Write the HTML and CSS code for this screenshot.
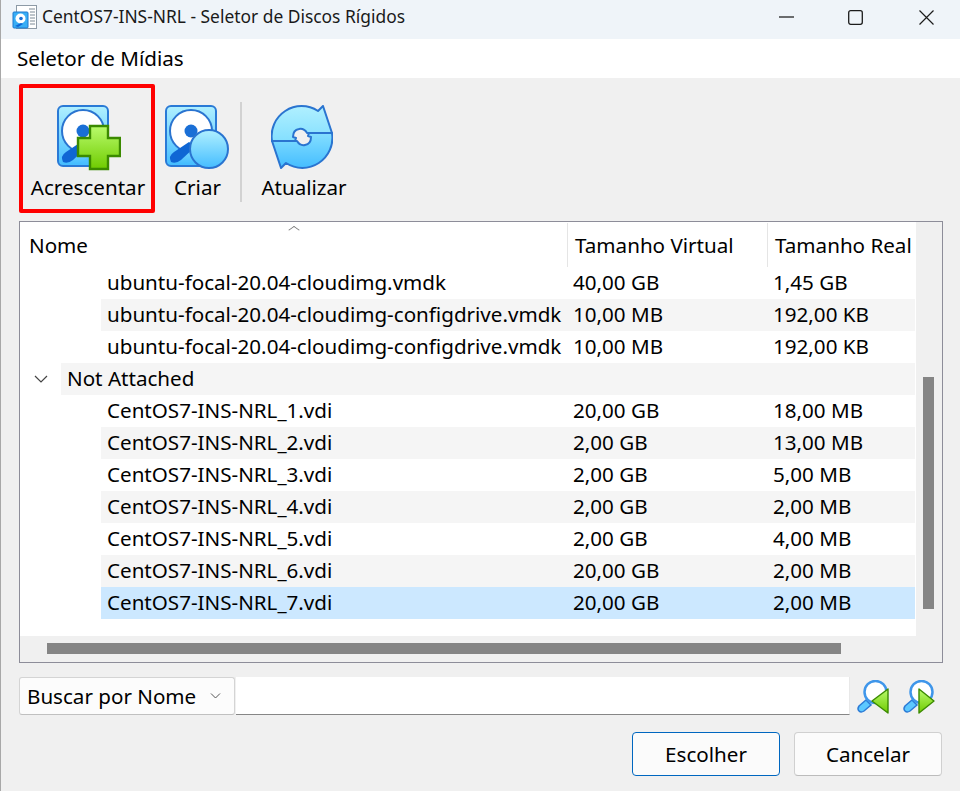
FILE: index.html
```html
<!DOCTYPE html>
<html>
<head>
	<meta charset="utf-8">
	<title>CentOS7-INS-NRL - Seletor de Discos Rígidos</title>
	<link rel="stylesheet" href="styles.css">
</head>
<body>
	<svg class="icon-defs">
		<defs>
			<linearGradient id="blue" x1="0" y1="0" x2="0" y2="1">
				<stop offset="0" stop-color="#b0f0ff"/>
				<stop offset="1" stop-color="#45bdff"/>
			</linearGradient>
			<linearGradient id="blue-top" x1="0" y1="0" x2="0" y2="1">
				<stop offset="0" stop-color="#b0f0ff"/>
				<stop offset="1" stop-color="#84dfff"/>
			</linearGradient>
			<linearGradient id="blue-bottom" x1="0" y1="0" x2="0" y2="1">
				<stop offset="0" stop-color="#84dfff"/>
				<stop offset="1" stop-color="#45bdff"/>
			</linearGradient>
			<linearGradient id="green" x1="0" y1="0" x2="0" y2="1">
				<stop offset="0" stop-color="#b9fb6c"/>
				<stop offset="1" stop-color="#6fcb00"/>
			</linearGradient>
			<symbol id="hdd" viewBox="0 0 52 62">
				<rect x="1" y="1" width="50" height="60" rx="5" fill="url(#blue)" stroke="#2a7ad6" stroke-width="2"/>
				<circle cx="26" cy="26" r="21" fill="#fff" stroke="#2a74d0" stroke-width="2"/>
				<path d="M6 59 Q4 52 10 48 L22 39 L32 32 L36 46 L24 59 Z" fill="url(#blue)"/>
				<path d="M6 57 Q3 51 9 47 L24 37 L30 42 L16 55 Q11 59 6 57 Z" fill="#0f66d4"/>
				<circle cx="26" cy="26" r="6.5" fill="#1a6fd6"/>
			</symbol>
			<symbol id="lens" viewBox="0 0 34 36">
				<path d="M3 26 L10 20 L15 25 L8 31 Q5 33 3 31 Q1 29 3 26 Z" fill="#5cc8ff" stroke="#2a7ad6" stroke-width="1.5"/>
				<circle cx="19.5" cy="12" r="11" fill="#fff" stroke="#3f96ea" stroke-width="2.5"/>
			</symbol>
		</defs>
	</svg>

	<div class="window">
		<div class="titlebar">
			<svg class="title-icon" width="26" height="26" viewBox="0 0 26 26">
				<rect x="4.5" y="1.5" width="20" height="23" fill="#fff" stroke="#8d9aa6"/>
				<path d="M17 5h6M18 8h5M18 11h5M18 14h5M18 17h5M18 20h5" stroke="#7d8a96"/>
				<rect x="1" y="8" width="15" height="16" rx="1" fill="#39aef5" stroke="#1d78cf"/>
				<circle cx="8.5" cy="14.5" r="5" fill="#fff"/>
				<circle cx="9" cy="14.5" r="1.8" fill="#1a6fd6"/>
				<path d="M3 22l6-3 2 1-5 3z" fill="#0f66d4"/>
			</svg>
			<span class="title-text">CentOS7-INS-NRL - Seletor de Discos Rígidos</span>
			<div class="window-controls">
				<svg class="ctl-min" width="15" height="2" viewBox="0 0 15 2"><path d="M0 1h15" stroke="#111" stroke-width="1.2"/></svg>
				<svg class="ctl-max" width="15" height="15" viewBox="0 0 15 15"><rect x="0.7" y="0.7" width="13.6" height="13.6" rx="2" fill="none" stroke="#1c1c1c" stroke-width="1.3"/></svg>
				<svg class="ctl-close" width="15" height="15" viewBox="0 0 15 15"><path d="M0.5 0.5l14 14M14.5 0.5l-14 14" fill="none" stroke="#1c1c1c" stroke-width="1.2"/></svg>
			</div>
		</div>
		<div class="subtitle">Seletor de Mídias</div>

		<div class="toolbar">
			<div class="tool tool-add">
				<svg class="tool-icon" width="64" height="66" viewBox="0 0 64 66">
					<use href="#hdd" x="0" y="0" width="52" height="62"/>
					<path d="M33 21H51V33H63V51H51V64H33V51H21V33H33Z" fill="url(#green)" stroke="#3b8a00" stroke-width="2.4"/>
				</svg>
				<span>Acrescentar</span>
			</div>
			<div class="tool tool-new">
				<svg class="tool-icon" width="64" height="66" viewBox="0 0 64 66">
					<use href="#hdd" x="0" y="0" width="52" height="62"/>
					<circle cx="44" cy="44" r="19" fill="url(#blue)" stroke="#2a74d0" stroke-width="2"/>
				</svg>
				<span>Criar</span>
			</div>
			<div class="tool-sep"></div>
			<div class="tool tool-refresh">
				<svg class="tool-icon" width="62" height="66" viewBox="0 0 62 64">
					<path d="M1 35 A30 30 0 0 1 47 5 L52 0 L61 27 L36 27 Q33 22 28 23 Q22 24 22 31 L25 32 L24 35 Z" fill="url(#blue-top)" stroke="#2a74d0" stroke-width="2" stroke-linejoin="round"/>
					<path d="M61 27 A30 30 0 0 1 15 57 L10 62 L1 35 L26 35 Q29 40 34 39 Q40 38 40 31 L37 30 L38 27 Z" fill="url(#blue-bottom)" stroke="#2a74d0" stroke-width="2" stroke-linejoin="round"/>
				</svg>
				<span>Atualizar</span>
			</div>
		</div>

		<div class="media-tree">
			<div class="tree-main">
				<div class="tree-view">
					<div class="tree-head">
						<div class="col-name">Nome<i class="sort-mark"></i></div>
						<div class="col-virtual">Tamanho Virtual</div>
						<div class="col-real">Tamanho Real</div>
					</div>
					<div class="row"><div class="col-name">ubuntu-focal-20.04-cloudimg.vmdk</div><div class="col-virtual">40,00 GB</div><div class="col-real">1,45 GB</div></div>
					<div class="row alt"><div class="col-name">ubuntu-focal-20.04-cloudimg-configdrive.vmdk</div><div class="col-virtual">10,00 MB</div><div class="col-real">192,00 KB</div></div>
					<div class="row"><div class="col-name">ubuntu-focal-20.04-cloudimg-configdrive.vmdk</div><div class="col-virtual">10,00 MB</div><div class="col-real">192,00 KB</div></div>
					<div class="group">
						<svg class="twisty" width="14" height="8" viewBox="0 0 14 8"><path d="M1 1l6 6 6-6" fill="none" stroke="#444" stroke-width="1.2"/></svg>
						<div class="group-label">Not Attached</div>
					</div>
					<div class="row"><div class="col-name">CentOS7-INS-NRL_1.vdi</div><div class="col-virtual">20,00 GB</div><div class="col-real">18,00 MB</div></div>
					<div class="row alt"><div class="col-name">CentOS7-INS-NRL_2.vdi</div><div class="col-virtual">2,00 GB</div><div class="col-real">13,00 MB</div></div>
					<div class="row"><div class="col-name">CentOS7-INS-NRL_3.vdi</div><div class="col-virtual">2,00 GB</div><div class="col-real">5,00 MB</div></div>
					<div class="row alt"><div class="col-name">CentOS7-INS-NRL_4.vdi</div><div class="col-virtual">2,00 GB</div><div class="col-real">2,00 MB</div></div>
					<div class="row"><div class="col-name">CentOS7-INS-NRL_5.vdi</div><div class="col-virtual">2,00 GB</div><div class="col-real">4,00 MB</div></div>
					<div class="row alt"><div class="col-name">CentOS7-INS-NRL_6.vdi</div><div class="col-virtual">20,00 GB</div><div class="col-real">2,00 MB</div></div>
					<div class="row selected"><div class="col-name">CentOS7-INS-NRL_7.vdi</div><div class="col-virtual">20,00 GB</div><div class="col-real">2,00 MB</div></div>
				</div>
				<div class="vscroll"><div class="vthumb"></div></div>
			</div>
			<div class="hscroll"><div class="hthumb"></div></div>
		</div>

		<div class="search-row">
			<div class="combo">
				<span>Buscar por Nome</span>
				<svg width="11" height="6" viewBox="0 0 11 6"><path d="M1 0.5l4.5 4.5 4.5-4.5" fill="none" stroke="#555"/></svg>
			</div>
			<div class="search-input"></div>
			<svg class="search-btn" width="34" height="36" viewBox="0 0 34 36">
				<use href="#lens" width="34" height="36"/>
				<path d="M16 21L32 9V33Z" fill="url(#green)" stroke="#3b8a00" stroke-width="1.4" stroke-linejoin="round"/>
			</svg>
			<svg class="search-btn" width="34" height="36" viewBox="0 0 34 36">
				<use href="#lens" width="34" height="36"/>
				<path d="M17 9L32 21L17 33Z" fill="url(#green)" stroke="#3b8a00" stroke-width="1.4" stroke-linejoin="round"/>
			</svg>
		</div>

		<div class="button-row">
			<div class="btn btn-default">Escolher</div>
			<div class="btn">Cancelar</div>
		</div>
	</div>
</body>
</html>
```

FILE: styles.css
```css
html, body {
	margin: 0;
	padding: 0;
}
body {
	width: 960px;
	height: 791px;
	overflow: hidden;
	background: #f0f0f0;
	font-family: "Noto Sans", sans-serif;
	font-size: 20.6px;
	color: #000;
}
.icon-defs {
	position: absolute;
	width: 0;
	height: 0;
}
.window {
	height: 791px;
	box-sizing: border-box;
	border-left: 1px solid #a8a8a8;
	display: flex;
	flex-direction: column;
}

/* title bar */
.titlebar {
	height: 39px;
	box-sizing: border-box;
	padding: 0 0 5px 11px;
	background: #eff4f9;
	display: flex;
	align-items: center;
}
.title-icon {
	margin-right: 4px;
}
.title-text {
	font-size: 17.4px;
	color: #1a1a1a;
	margin-bottom: 2px;
}
.window-controls {
	margin-left: auto;
	display: flex;
	align-items: center;
}
.ctl-max {
	margin-left: 54px;
}
.ctl-close {
	margin-left: 56px;
	margin-right: 26px;
}
.subtitle {
	height: 39px;
	line-height: 39px;
	background: #fff;
	padding-left: 16px;
}

/* toolbar */
.toolbar {
	height: 143px;
	box-sizing: border-box;
	padding: 6px 0 0 18px;
	display: flex;
	align-items: flex-start;
}
.tool {
	display: flex;
	flex-direction: column;
	align-items: center;
}
.tool span {
	line-height: 26px;
	margin-top: 3px;
}
.tool-icon {
	display: block;
}
.tool-add {
	width: 136px;
	height: 129px;
	box-sizing: border-box;
	border: 4px solid #f00;
	border-radius: 2px;
	padding: 17px 0 0 4px;
}
.tool-add span {
	margin-left: -2px;
}
.tool-new {
	margin: 21px 0 0 9px;
	width: 66px;
}
.tool-new span {
	margin-left: 1px;
}
.tool-sep {
	width: 2px;
	height: 100px;
	margin: 18px 0 0 10px;
	background: #d2d2d2;
}
.tool-refresh {
	margin: 21px 0 0 19px;
	width: 86px;
}
.tool-refresh .tool-icon {
	margin-right: 4px;
}

/* media tree */
.media-tree {
	width: 924px;
	height: 442px;
	margin-left: 18px;
	box-sizing: border-box;
	border: 1px solid #8d8d99;
	background: #f0f0f0;
	display: flex;
	flex-direction: column;
}
.tree-main {
	height: 414px;
	display: flex;
}
.tree-view {
	width: 896px;
	background: #fff;
	overflow: hidden;
}
.tree-head, .row {
	display: flex;
	white-space: nowrap;
}
.tree-head {
	height: 45px;
	box-sizing: border-box;
	padding-top: 1px;
	line-height: 44px;
}
.tree-head .col-name {
	width: 547px;
	box-sizing: border-box;
	padding-left: 9px;
	position: relative;
}
.tree-head .col-virtual {
	width: 200px;
	box-sizing: border-box;
	padding-left: 7px;
	border-left: 1px solid #e5e5e5;
}
.tree-head .col-real {
	width: 148px;
	box-sizing: border-box;
	padding-left: 7px;
	border-left: 1px solid #e5e5e5;
	overflow: hidden;
}
.sort-mark {
	position: absolute;
	left: 270px;
	top: 3px;
	width: 7px;
	height: 7px;
	border-left: 1px solid #777;
	border-top: 1px solid #777;
	transform: scaleY(0.7) rotate(45deg);
}
.row {
	height: 32px;
	line-height: 31px;
	margin: 0 1px 0 81px;
}
.row .col-name {
	width: 472px;
	padding-left: 6px;
	box-sizing: border-box;
}
.row .col-virtual {
	width: 200px;
}
.row.alt, .group-label {
	background: #f5f5f5;
}
.row.selected {
	background: #cce8ff;
}
.group {
	height: 32px;
	display: flex;
	align-items: center;
	padding: 0 1px 0 14px;
}
.group-label {
	flex: 1;
	height: 32px;
	line-height: 31px;
	margin-left: 13px;
	padding-left: 6px;
}
.twisty {
	flex: none;
}
.vscroll {
	flex: 1;
	padding: 155px 8px 0 7px;
}
.vthumb {
	width: 11px;
	height: 232px;
	background: #858585;
}
.hscroll {
	flex: 1;
	padding: 7px 0 0 27px;
}
.hthumb {
	width: 794px;
	height: 11px;
	background: #858585;
}

/* search */
.search-row {
	display: flex;
	align-items: flex-start;
	margin: 14px 0 0 18px;
	height: 38px;
}
.combo {
	width: 216px;
	height: 38px;
	box-sizing: border-box;
	background: #fcfcfc;
	border: 1px solid #d4d4d4;
	border-bottom-color: #c0c0c0;
	border-radius: 3px;
	display: flex;
	align-items: center;
	justify-content: space-between;
	padding: 0 13px 0 7px;
}
.search-input {
	width: 614px;
	height: 38px;
	box-sizing: border-box;
	margin-left: 1px;
	background: #fff;
	border-bottom: 1px solid #868686;
	border-right: 1px solid #e8e8e8;
}
.search-btn {
	margin: 3px 0 0 6px;
	display: block;
}
.search-btn + .search-btn {
	margin-left: 12px;
}

/* buttons */
.button-row {
	display: flex;
	margin: 17px 0 0 631px;
	gap: 14px;
}
.btn {
	width: 148px;
	height: 44px;
	box-sizing: border-box;
	line-height: 42px;
	text-align: center;
	background: #fbfbfb;
	border: 1px solid #d0d0d0;
	border-bottom-color: #bcbcbc;
	border-radius: 4px;
}
.btn-default {
	border-color: #0067c0;
}
```
